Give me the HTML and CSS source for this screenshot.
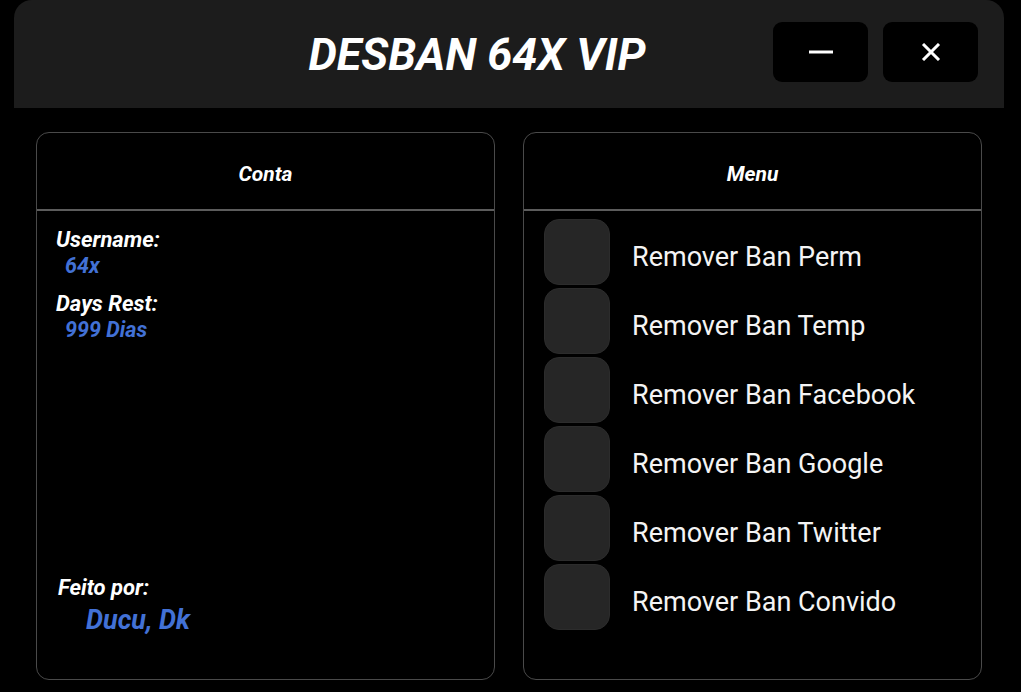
FILE: index.html
```html
<!DOCTYPE html>
<html>
<head>
<meta charset="utf-8">
<link rel="stylesheet" href="styles.css">
</head>
<body>
<header class="topbar">
  <h1 class="title">DESBAN 64X VIP</h1>
  <div class="win-btns">
    <button class="win-btn" aria-label="Minimizar">
      <svg width="26" height="6" viewBox="0 0 26 6"><path d="M1 3H25" stroke="#fff" stroke-width="3"/></svg>
    </button>
    <button class="win-btn" aria-label="Fechar">
      <svg width="20" height="18" viewBox="0 0 20 18"><path d="M2 1L18 17M18 1L2 17" stroke="#fff" stroke-width="3"/></svg>
    </button>
  </div>
</header>
<main class="content">
  <section class="panel">
    <div class="panel-head">Conta</div>
    <div class="panel-body account">
      <div class="field">
        <div class="label">Username:</div>
        <div class="value">64x</div>
      </div>
      <div class="field">
        <div class="label">Days Rest:</div>
        <div class="value">999 Dias</div>
      </div>
      <div class="credits">
        <div class="label credits-label">Feito por:</div>
        <div class="credits-value">Ducu, Dk</div>
      </div>
    </div>
  </section>
  <section class="panel">
    <div class="panel-head">Menu</div>
    <div class="panel-body menu">
      <div class="menu-row"><span class="toggle"></span><span class="menu-text">Remover Ban Perm</span></div>
      <div class="menu-row"><span class="toggle"></span><span class="menu-text">Remover Ban Temp</span></div>
      <div class="menu-row"><span class="toggle"></span><span class="menu-text">Remover Ban Facebook</span></div>
      <div class="menu-row"><span class="toggle"></span><span class="menu-text">Remover Ban Google</span></div>
      <div class="menu-row"><span class="toggle"></span><span class="menu-text">Remover Ban Twitter</span></div>
      <div class="menu-row"><span class="toggle"></span><span class="menu-text">Remover Ban Convido</span></div>
    </div>
  </section>
</main>
</body>
</html>
```

FILE: styles.css
```css
* { box-sizing: border-box; }
html, body {
  margin: 0;
  padding: 0;
  background: #000;
  width: 1021px;
  height: 692px;
  overflow: hidden;
  font-family: Roboto, "Liberation Sans", sans-serif;
  color: #fff;
}
.topbar {
  margin: 0 17px 0 14px;
  height: 108px;
  background: #1c1c1c;
  border-radius: 18px 18px 0 0;
  display: flex;
  align-items: center;
  padding: 0 26px 4px 182px;
}
.title {
  flex: 1;
  margin: 0;
  text-align: center;
  font-size: 45px;
  font-weight: 700;
  font-style: italic;
  color: #fff;
  padding-right: 15px;
  padding-top: 4px;
}
.win-btns {
  display: flex;
  gap: 15px;
}
.win-btn {
  width: 95px;
  height: 60px;
  background: #000;
  border: none;
  border-radius: 9px;
  display: flex;
  align-items: center;
  justify-content: center;
  padding: 0;
}
.content {
  display: grid;
  grid-template-columns: 459px 459px;
  gap: 28px;
  padding: 24px 0 12px 36px;
  height: 584px;
}
.panel {
  border: 1px solid #4a4a4a;
  border-radius: 13px;
  display: flex;
  flex-direction: column;
  height: 548px;
}
.panel-head {
  height: 78px;
  flex: none;
  display: flex;
  align-items: center;
  justify-content: center;
  font-size: 21px;
  font-weight: 700;
  font-style: italic;
  padding-top: 6px;
  border-bottom: 2px solid #5c5c5c;
}
.panel-body {
  flex: 1;
  display: flex;
  flex-direction: column;
}
.account {
  padding: 16px 19px 42px 19px;
}
.field {
  margin-bottom: 12px;
}
.label {
  font-size: 22px;
  line-height: 26px;
  font-weight: 700;
  font-style: italic;
  color: #fff;
}
.value {
  font-size: 21.5px;
  line-height: 26px;
  font-weight: 700;
  font-style: italic;
  color: #4271d6;
  padding-left: 9px;
}
.credits {
  margin-top: auto;
  display: flex;
  flex-direction: column;
  gap: 2px;
}
.credits-label {
  padding-left: 2px;
}
.credits-value {
  font-size: 27px;
  line-height: 34px;
  font-weight: 700;
  font-style: italic;
  color: #4271d6;
  padding-left: 30px;
}
.menu {
  padding: 8px 20px 0 20px;
  gap: 3px;
}
.menu-row {
  display: flex;
  align-items: center;
  gap: 22px;
}
.toggle {
  width: 66px;
  height: 66px;
  background: #262626;
  border: 1px solid #2c2c2c;
  border-radius: 15px;
  flex: none;
}
.menu-text {
  font-size: 27px;
  font-weight: 400;
  color: #f4f4f4;
  padding-top: 9px;
}
```
